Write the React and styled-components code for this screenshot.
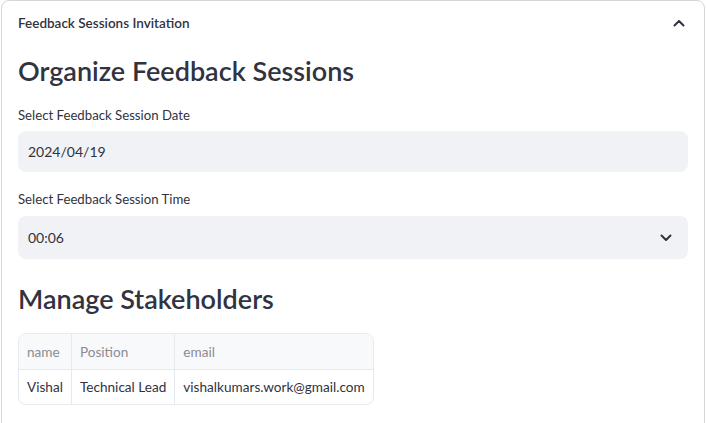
import React from 'react'
import styled, { createGlobalStyle } from 'styled-components'

const GlobalStyle = createGlobalStyle`
    html, body {
        margin: 0;
        padding: 0;
        background: #ffffff;
        overflow: hidden;
    }
    body {
        font-family: Lato, "Noto Sans", sans-serif;
        color: #31333f;
    }
`

const stakeholders = [
    { name: "Vishal", position: "Technical Lead", email: "vishalkumars.work@gmail.com" },
]

const ChevronIcon = ({ up }) => (
    <svg width="12" height="8" viewBox="0 0 12 8" fill="none">
        <path
            d={up ? "M1.5 6.5 L6 2 L10.5 6.5" : "M1.5 1.5 L6 6 L10.5 1.5"}
            stroke="#31333f"
            strokeWidth="2"
            strokeLinecap="round"
            strokeLinejoin="round"
        />
    </svg>
)

const App = () => {
    return (
        <>
            <GlobalStyle />
            <StyledExpander>
                <StyledSummary>
                    <span>Feedback Sessions Invitation</span>
                    <ChevronIcon up />
                </StyledSummary>
                <StyledContent>
                    <StyledHeading $mt={7}>Organize Feedback Sessions</StyledHeading>

                    <StyledLabel $mt={14}>Select Feedback Session Date</StyledLabel>
                    <StyledInputBox $h={41} $mt={5}>2024/04/19</StyledInputBox>

                    <StyledLabel $mt={17}>Select Feedback Session Time</StyledLabel>
                    <StyledInputBox $h={43} $mt={6}>
                        <span>00:06</span>
                        <ChevronIcon />
                    </StyledInputBox>

                    <StyledHeading $mt={20}>Manage Stakeholders</StyledHeading>

                    <StyledTable>
                        <thead>
                            <tr>
                                <StyledHeadCell>name</StyledHeadCell>
                                <StyledHeadCell>Position</StyledHeadCell>
                                <StyledHeadCell>email</StyledHeadCell>
                            </tr>
                        </thead>
                        <tbody>
                            {stakeholders.map((s) => (
                                <tr key={s.email}>
                                    <StyledCell>{s.name}</StyledCell>
                                    <StyledCell>{s.position}</StyledCell>
                                    <StyledCell>{s.email}</StyledCell>
                                </tr>
                            ))}
                        </tbody>
                    </StyledTable>
                </StyledContent>
            </StyledExpander>
        </>
    )
}


const StyledExpander = styled.div`
    margin: 0 1px;
    height: 460px;
    border: 1px solid rgba(49, 51, 63, 0.2);
    border-radius: 8px;
    box-sizing: border-box;
`

const StyledSummary = styled.div`
    display: flex;
    align-items: center;
    justify-content: space-between;
    height: 43px;
    padding: 0 19px 0 16px;
    font-size: 13.5px;
    font-weight: 600;
    color: #31333f;
`

const StyledContent = styled.div`
    display: flex;
    flex-direction: column;
    align-items: flex-start;
    padding: 0 16px;
`

const StyledHeading = styled.h3`
    margin: ${(props) => props.$mt}px 0 0 0;
    font-size: 27px;
    line-height: 40px;
    font-weight: 600;
    color: #31333f;
`

const StyledLabel = styled.div`
    margin-top: ${(props) => props.$mt}px;
    font-size: 13.2px;
    line-height: 21px;
    color: #31333f;
`

const StyledInputBox = styled.div`
    display: flex;
    align-items: center;
    justify-content: space-between;
    box-sizing: border-box;
    width: 100%;
    height: ${(props) => props.$h}px;
    margin-top: ${(props) => props.$mt}px;
    padding: 0 16px 0 10px;
    border-radius: 8px;
    background: #f0f2f6;
    font-size: 14px;
    color: #31333f;
`

const StyledTable = styled.table`
    margin-top: 14px;
    border-collapse: separate;
    border-spacing: 0;
    border: 1px solid #e6e9ef;
    border-radius: 8px;
    overflow: hidden;
    font-size: 13.6px;

    & th + th, & td + td {
        border-left: 1px solid #e6e9ef;
    }
`

const StyledHeadCell = styled.th`
    height: 35px;
    padding: 0 8px;
    text-align: left;
    font-weight: 400;
    color: #8a8c93;
    background: #f8f9fb;
    border-bottom: 1px solid #e6e9ef;
`

const StyledCell = styled.td`
    height: 34px;
    padding: 0 8px;
    color: #31333f;
    white-space: nowrap;
`


export default App
